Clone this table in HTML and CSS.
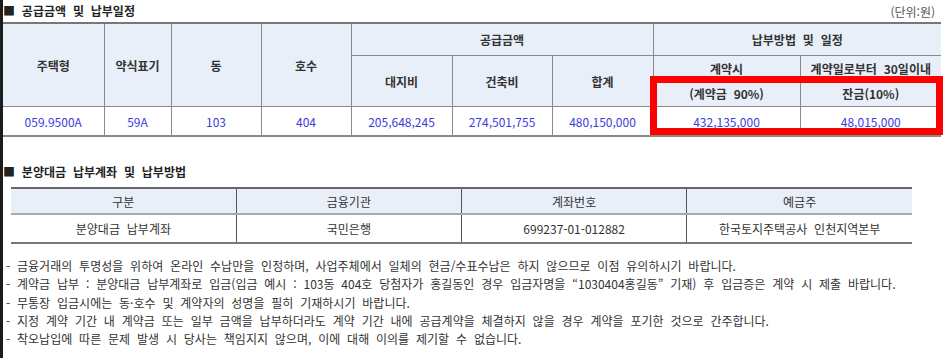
FILE: index.html
```html
<!DOCTYPE html>
<html lang="ko">

<head>
  <meta charset="UTF-8">
  <title>공급금액 및 납부일정</title>
  <link rel="stylesheet" href="styles.css">
</head>

<body>
  <div class="page">

    <!-- 공급금액 및 납부일정 -->
    <div class="title-row">
      <h3 class="sec-title">■ 공급금액 및 납부일정</h3>
      <span class="unit">(단위:원)</span>
    </div>

    <div class="supply-wrap">
      <table class="supply">
        <colgroup>
          <col class="w101">
          <col class="w67">
          <col class="w90">
          <col class="w90">
          <col class="w101">
          <col class="w100">
          <col class="w101">
          <col class="w147">
          <col class="w141">
        </colgroup>
        <thead>
          <tr class="h1">
            <th rowspan="3">주택형</th>
            <th rowspan="3">약식표기</th>
            <th rowspan="3">동</th>
            <th rowspan="3">호수</th>
            <th colspan="3">공급금액</th>
            <th colspan="2">납부방법 및 일정</th>
          </tr>
          <tr class="h2">
            <th rowspan="2">대지비</th>
            <th rowspan="2">건축비</th>
            <th rowspan="2">합계</th>
            <th class="sub-top">계약시</th>
            <th class="sub-top">계약일로부터 30일이내</th>
          </tr>
          <tr class="h3">
            <th>(계약금 90%)</th>
            <th>잔금(10%)</th>
          </tr>
        </thead>
        <tbody>
          <tr>
            <td>059.9500A</td>
            <td>59A</td>
            <td>103</td>
            <td>404</td>
            <td>205,648,245</td>
            <td>274,501,755</td>
            <td>480,150,000</td>
            <td>432,135,000</td>
            <td>48,015,000</td>
          </tr>
        </tbody>
      </table>
      <!-- highlight box -->
      <div class="highlight"></div>
    </div>

    <!-- 분양대금 납부계좌 및 납부방법 -->
    <h3 class="sec-title second">■ 분양대금 납부계좌 및 납부방법</h3>

    <table class="account">
      <thead>
        <tr>
          <th>구분</th>
          <th>금융기관</th>
          <th>계좌번호</th>
          <th>예금주</th>
        </tr>
      </thead>
      <tbody>
        <tr>
          <td>분양대금 납부계좌</td>
          <td>국민은행</td>
          <td>699237-01-012882</td>
          <td>한국토지주택공사 인천지역본부</td>
        </tr>
      </tbody>
    </table>

    <ul class="notes">
      <li>- 금융거래의 투명성을 위하여 온라인 수납만을 인정하며, 사업주체에서 일체의 현금/수표수납은 하지 않으므로 이점 유의하시기 바랍니다.</li>
      <li>- 계약금 납부 : 분양대금 납부계좌로 입금(입금 예시 : 103동 404호 당첨자가 홍길동인 경우 입금자명을 “1030404홍길동” 기재) 후 입금증은 계약 시 제출 바랍니다.</li>
      <li>- 무통장 입금시에는 동·호수 및 계약자의 성명을 필히 기재하시기 바랍니다.</li>
      <li>- 지정 계약 기간 내 계약금 또는 일부 금액을 납부하더라도 계약 기간 내에 공급계약을 체결하지 않을 경우 계약을 포기한 것으로 간주합니다.</li>
      <li>- 착오납입에 따른 문제 발생 시 당사는 책임지지 않으며, 이에 대해 이의를 제기할 수 없습니다.</li>
    </ul>

  </div>
</body>

</html>
```

FILE: styles.css
```css
/* General Page Styles */
body {
  margin: 0;
  background: #fff;
  font-family: "Noto Sans CJK KR", "Noto Sans", sans-serif;
  font-size: 12px;
  color: #333;
  word-spacing: 3.5px;
}

.page {
  border-left: 3px solid #1c1c1c;
  min-height: 358px;
  box-sizing: border-box;
}

/* Section Titles */
.title-row {
  display: flex;
  justify-content: space-between;
  align-items: center;
  height: 22px;
  padding-right: 14px;
}

.sec-title {
  margin: 0;
  font-size: 12px;
  font-weight: bold;
  color: #222;
  line-height: 16px;
}

.sec-title.second {
  margin: 27px 0 7px 0;
}

.unit {
  color: #555;
}

/* Supply Table */
.supply-wrap {
  position: relative;
  width: 938px;
}

table {
  border-collapse: collapse;
  table-layout: fixed;
}

.supply {
  width: 938px;
  border-top: 2px solid #777;
  border-bottom: 2px solid #888;
}

.supply th,
.supply td {
  border: 1px solid #8a8a8a;
  text-align: center;
  padding: 0;
}

.supply tr > :first-child {
  border-left: none;
}

.supply tr > :last-child {
  border-right: none;
}

.supply th {
  background: #e9eff9;
  font-weight: bold;
  color: #333;
}

.supply .h1 th {
  height: 31px;
}

.supply .h2 th {
  height: 24px;
}

.supply .h3 th {
  height: 25px;
}

.supply th.sub-top {
  border-bottom: 1px solid #dcdcdc;
}

.supply td {
  height: 28px;
  color: #3c3cdc;
}

.w67 { width: 67px; }
.w90 { width: 90px; }
.w100 { width: 100px; }
.w101 { width: 101px; }
.w141 { width: 141px; }
.w147 { width: 147px; }

/* Red Highlight Box */
.highlight {
  position: absolute;
  left: 647px;
  top: 54px;
  width: 293px;
  height: 59px;
  border: 7px solid #f00;
  box-sizing: border-box;
}

/* Account Table */
.account {
  width: 901px;
  margin-left: 8px;
  border-top: 2px solid #666;
  border-bottom: 2px solid #777;
}

.account th,
.account td {
  border-left: 1px solid #555;
  text-align: center;
  padding: 0;
  font-weight: normal;
}

.account tr > :first-child {
  border-left: none;
}

.account th {
  background: #e9eff9;
  height: 24px;
  border-bottom: 2px solid #aaa;
}

.account td {
  height: 27px;
}

/* Notes */
.notes {
  list-style: none;
  margin: 13px 0 0 0;
  padding: 0 0 0 3px;
}

.notes li {
  line-height: 18.3px;
  white-space: nowrap;
}
```
